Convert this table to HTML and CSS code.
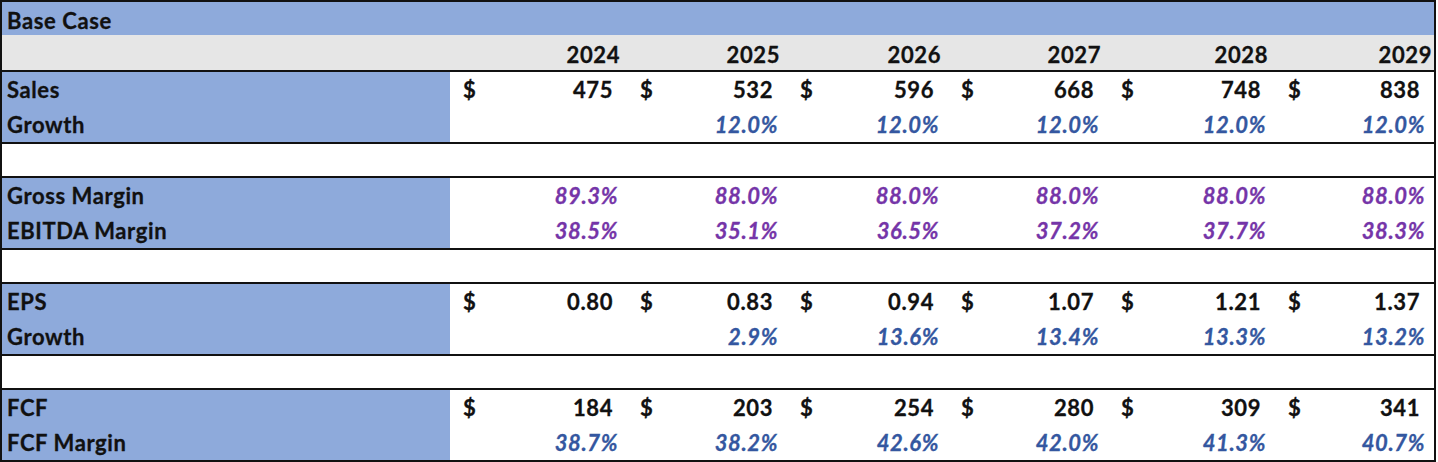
FILE: index.html
```html
<!DOCTYPE html>
<html lang="en">
<head>
<meta charset="utf-8">
<title>Base Case</title>
<link rel="stylesheet" href="styles.css">
</head>
<body>
<div class="sheet">
  <div class="title">Base Case</div>
  <div class="row header">
    <div class="label"></div>
    <div class="year">2024</div>
    <div class="year">2025</div>
    <div class="year">2026</div>
    <div class="year">2027</div>
    <div class="year">2028</div>
    <div class="year last">2029</div>
  </div>

  <div class="group">
    <div class="row">
      <div class="label">Sales</div>
      <div class="cell"><span>$</span><span>475</span></div>
      <div class="cell"><span>$</span><span>532</span></div>
      <div class="cell"><span>$</span><span>596</span></div>
      <div class="cell"><span>$</span><span>668</span></div>
      <div class="cell"><span>$</span><span>748</span></div>
      <div class="cell"><span>$</span><span>838</span></div>
    </div>
    <div class="row">
      <div class="label">Growth</div>
      <div class="cell pct blue"></div>
      <div class="cell pct blue">12.0%</div>
      <div class="cell pct blue">12.0%</div>
      <div class="cell pct blue">12.0%</div>
      <div class="cell pct blue">12.0%</div>
      <div class="cell pct blue">12.0%</div>
    </div>
  </div>
  <div class="blank"></div>

  <div class="group">
    <div class="row">
      <div class="label">Gross Margin</div>
      <div class="cell pct purple">89.3%</div>
      <div class="cell pct purple">88.0%</div>
      <div class="cell pct purple">88.0%</div>
      <div class="cell pct purple">88.0%</div>
      <div class="cell pct purple">88.0%</div>
      <div class="cell pct purple">88.0%</div>
    </div>
    <div class="row">
      <div class="label">EBITDA Margin</div>
      <div class="cell pct purple">38.5%</div>
      <div class="cell pct purple">35.1%</div>
      <div class="cell pct purple">36.5%</div>
      <div class="cell pct purple">37.2%</div>
      <div class="cell pct purple">37.7%</div>
      <div class="cell pct purple">38.3%</div>
    </div>
  </div>
  <div class="blank"></div>

  <div class="group">
    <div class="row">
      <div class="label">EPS</div>
      <div class="cell"><span>$</span><span>0.80</span></div>
      <div class="cell"><span>$</span><span>0.83</span></div>
      <div class="cell"><span>$</span><span>0.94</span></div>
      <div class="cell"><span>$</span><span>1.07</span></div>
      <div class="cell"><span>$</span><span>1.21</span></div>
      <div class="cell"><span>$</span><span>1.37</span></div>
    </div>
    <div class="row">
      <div class="label">Growth</div>
      <div class="cell pct blue"></div>
      <div class="cell pct blue">2.9%</div>
      <div class="cell pct blue">13.6%</div>
      <div class="cell pct blue">13.4%</div>
      <div class="cell pct blue">13.3%</div>
      <div class="cell pct blue">13.2%</div>
    </div>
  </div>
  <div class="blank"></div>

  <div class="group">
    <div class="row">
      <div class="label">FCF</div>
      <div class="cell"><span>$</span><span>184</span></div>
      <div class="cell"><span>$</span><span>203</span></div>
      <div class="cell"><span>$</span><span>254</span></div>
      <div class="cell"><span>$</span><span>280</span></div>
      <div class="cell"><span>$</span><span>309</span></div>
      <div class="cell"><span>$</span><span>341</span></div>
    </div>
    <div class="row">
      <div class="label">FCF Margin</div>
      <div class="cell pct blue">38.7%</div>
      <div class="cell pct blue">38.2%</div>
      <div class="cell pct blue">42.6%</div>
      <div class="cell pct blue">42.0%</div>
      <div class="cell pct blue">41.3%</div>
      <div class="cell pct blue">40.7%</div>
    </div>
  </div>
</div>
</body>
</html>
```

FILE: styles.css
```css
html, body {
  margin: 0;
  padding: 0;
  background: #ffffff;
}

.sheet {
  box-sizing: border-box;
  width: 1436px;
  border: 2px solid #111111;
  font-family: Lato, "Open Sans", sans-serif;
  font-weight: 700;
  font-size: 22px;
  line-height: 25px;
  letter-spacing: 0.6px;
  color: #111111;
  -webkit-text-stroke: 0.3px currentColor;
}

.title {
  box-sizing: border-box;
  height: 33px;
  padding: 6px 0 0 5px;
  background: #8eaadb;
}

.row {
  display: grid;
  grid-template-columns: 448px 177px 160px 161px 160px 167px 159px;
  height: 35px;
}

.header {
  background: #e6e6e6;
}

.header .year {
  box-sizing: border-box;
  padding: 7px 7px 0 0;
  text-align: right;
}

.header .year.last {
  padding-right: 2px;
}

.group {
  border-top: 2px solid #111111;
}

.blank {
  height: 32px;
  border-top: 2px solid #111111;
}

.group .label {
  box-sizing: border-box;
  background: #8eaadb;
  padding: 5px 0 0 5px;
}

.cell {
  box-sizing: border-box;
  display: flex;
  justify-content: space-between;
  padding: 5px 14px 0 13px;
}

.cell.pct {
  justify-content: flex-end;
  font-style: italic;
  padding-right: 9px;
}

.blue {
  color: #3457a0;
}

.purple {
  color: #7535a8;
}
```
